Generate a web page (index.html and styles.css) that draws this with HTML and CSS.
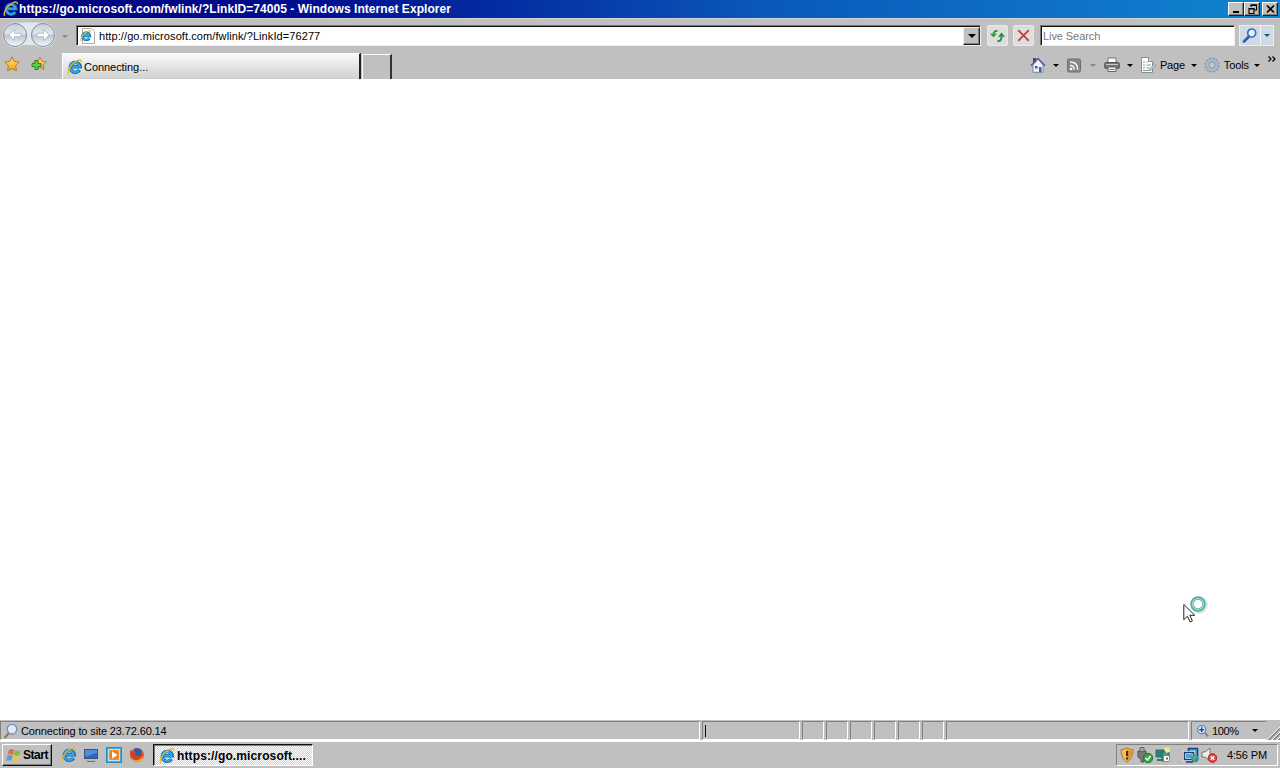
FILE: index.html
```html
<!DOCTYPE html>
<html lang="en">
<head>
<meta charset="utf-8">
<title>Windows Internet Explorer</title>
<link rel="stylesheet" href="styles.css">
</head>
<body>
<svg class="defs" width="0" height="0" aria-hidden="true">
  <defs>
    <linearGradient id="orb" x2="0" y2="1"><stop stop-color="#c3cedb"/><stop offset=".45" stop-color="#dfe6ee"/><stop offset=".5" stop-color="#b9c5d4"/><stop offset="1" stop-color="#f4f8fb"/></linearGradient>
    <linearGradient id="starfill" x2="0" y2="1"><stop stop-color="#ffe778"/><stop offset="1" stop-color="#f5a01c"/></linearGradient>
    <symbol id="ie" viewBox="0 0 16 16">
      <path d="M12.5 11a5 5 0 1 1 .7-3.2H5" fill="none" stroke="#1267ad" stroke-width="3.4"/>
      <path d="M12 10.9a4.8 4.8 0 1 1 .7-3.2H5" fill="none" stroke="#35a9e8" stroke-width="1.9"/>
      <path d="M2.2 14.7C-.7 13 4 4.8 9.5 2c3.4-1.8 5.4-1.2 4.8 1.4" fill="none" stroke="#e9b829" stroke-width="1.4"/>
    </symbol>
    <symbol id="star" viewBox="0 0 16 16"><path d="M8 .8l2.2 4.6 5.1.7-3.7 3.6.9 5.1L8 12.4l-4.5 2.4.9-5.1L.7 6.1l5.1-.7z" fill="url(#starfill)" stroke="#b9781c"/></symbol>
    <symbol id="lens" viewBox="0 0 16 16"><path d="M7 9.5L2 14.5" stroke="#2e59ad" stroke-width="2.6" stroke-linecap="round"/><circle cx="9.7" cy="6" r="4" fill="#e4f2fc" stroke="#3d6bc0" stroke-width="1.7"/></symbol>
  </defs>
</svg>

<header class="titlebar">
  <svg class="i16"><use href="#ie"/></svg>
  <span class="title">https://go.microsoft.com/fwlink/?LinkID=74005 - Windows Internet Explorer</span>
  <div class="winbtns">
    <button class="wb"><svg viewBox="0 0 13 10"><path d="M3 8h6" stroke="#000" stroke-width="2"/></svg></button>
    <button class="wb"><svg viewBox="0 0 13 10"><path d="M5 3V.9h5.5V6H8M5 1.5h5.5M3 4.5h5v5H3zM3 5h5" fill="none" stroke="#000" stroke-width="1.1"/></svg></button>
    <button class="wb close"><svg viewBox="0 0 13 10"><path d="M3 1.5l7 7m0-7l-7 7" stroke="#000" stroke-width="1.7"/></svg></button>
  </div>
</header>

<nav class="address-row">
  <svg class="orbs" viewBox="0 0 58 28">
    <path d="M15 1.5h28a12.5 12.5 0 0 1 0 25q-5 0-8-2.5H23q-3 2.5-8 2.5a12.5 12.5 0 0 1 0-25" fill="#e2e7eb"/>
    <g fill="url(#orb)" stroke="#7f8c99"><circle cx="15" cy="14" r="11.5"/><circle cx="43" cy="14" r="11.5"/></g>
    <path d="M14.5 8.5L8.8 14l5.7 5.5v-3.8H21v-3.4h-6.5zM43.5 8.5l5.7 5.5-5.7 5.5v-3.8H37v-3.4h6.5z" fill="#fff" stroke="#a3b2c2" stroke-width=".8"/>
  </svg>
  <i class="arrow dim history"></i>
  <div class="address field">
    <svg class="i16 pageie" viewBox="0 0 16 16"><path d="M2.5.5h9l3 3v12h-12z" fill="#fff" stroke="#a9a9a9"/><use href="#ie" x="0" y="2" width="12" height="12"/></svg>
    <span class="url">http://go.microsoft.com/fwlink/?LinkId=76277</span>
    <button class="drop"><i class="arrow big"></i></button>
  </div>
  <button class="tool refresh"><svg viewBox="0 0 17 17"><path d="M8.5 4q-4-.5-4 4" fill="none" stroke="#2f9a43" stroke-width="1.9"/><path d="M1 6.8h7L4.5 10.5z" fill="#2f9a43"/><path d="M8.5 14q4 .5 4-4" fill="none" stroke="#2c873c" stroke-width="1.9"/><path d="M9 9.8h7L12.5 5.5z" fill="#2c873c"/></svg></button>
  <button class="tool stop"><svg viewBox="0 0 16 16"><path d="M3 3l10 10M13 3L3 13" stroke="#c43e42" stroke-width="1.8"/></svg></button>
  <div class="search field"><span>Live Search</span></div>
  <div class="go"><button><svg class="i16"><use href="#lens"/></svg></button><button><i class="arrow blue"></i></button></div>
</nav>

<div class="tabs-row">
  <svg class="i16 fav"><use href="#star"/></svg>
  <svg class="i16 addfav" viewBox="0 0 16 16"><use href="#star" x="2" y="0" width="14" height="15"/><path d="M4 4.5h3v3h3v3H7v3H4v-3H1v-3h3z" fill="#5fd045" stroke="#28862b"/></svg>
  <div class="tab"><svg class="i16"><use href="#ie"/></svg><span>Connecting...</span></div>
  <div class="newtab"></div>
  <div class="commands">
    <svg class="i16 home" viewBox="0 0 16 16"><path d="M3 1h3v5H3z" fill="#4d3e88"/><path d="M3 8l5-6 5 6v7.3H3z" fill="#f1f3fa" stroke="#7986a8"/><path d="M.8 8.8L8 1.5l7.2 7.3" fill="none" stroke="#5b5c9e" stroke-width="1.5"/><path d="M5 9h2.5v2.5H5zM9 10h2.5v5H9z" fill="#3d5d93"/></svg>
    <i class="arrow a1"></i>
    <svg class="i16 feed" viewBox="0 0 16 16"><rect x="1.5" y="2" width="13" height="13" rx="1.5" fill="#878787" stroke="#6e6e6e"/><path d="M4 8.5q4.2 0 4.2 4.2M4 5q7.7 0 7.7 7.7" fill="none" stroke="#f4f4f4" stroke-width="1.5"/><circle cx="5" cy="12" r="1.3" fill="#fff"/></svg>
    <i class="arrow dim a2"></i>
    <svg class="i16 printer" viewBox="0 0 16 16"><path d="M4 6V1h8v5" fill="#fff" stroke="#777"/><rect x=".7" y="5.5" width="14.6" height="6" rx="1.5" fill="#777" stroke="#555"/><path d="M2 7.5h12" stroke="#c7c7c7"/><path d="M4 10h8v4.5H4z" fill="#f1f1f1" stroke="#666"/><path d="M5.5 12.5h5" stroke="#777"/></svg>
    <i class="arrow a3"></i>
    <svg class="i16 page" viewBox="0 0 16 16"><path d="M1.5.5h7l4 4v11h-11z" fill="#fff" stroke="#83928b"/><path d="M8.5.5v4h4" fill="#ddd" stroke="#83928b"/><path d="M3 5h2m1.5 0H8M3 8h2m1.5 0H11M3 11h2m1.5 0H10M3 13.5h7" stroke="#879a8c"/><path d="M9.5 12.5l5-6 1.3 1.5-5 5.5z" fill="#dfe5dc" stroke="#61756a" stroke-width=".7"/></svg>
    <span class="pagetext">Page</span><i class="arrow a4"></i>
    <svg class="i16 gear" viewBox="0 0 16 16"><circle cx="8" cy="8" r="6.7" fill="none" stroke="#8194a9" stroke-width="1.6" stroke-dasharray="2.3 1.2"/><circle cx="8" cy="8" r="4.7" fill="none" stroke="#a6b8c9" stroke-width="3.2"/><circle cx="8" cy="8" r="3" fill="#c8c8c8" stroke="#7890a8" stroke-width=".8"/></svg>
    <span class="toolstext">Tools</span><i class="arrow a5"></i>
    <svg class="chevrons" viewBox="0 0 8 6"><path d="M.5.5L3 3 .5 5.5M4.5.5L7 3 4.5 5.5" fill="none" stroke="#000" stroke-width="1.2"/></svg>
  </div>
</div>

<main class="document"></main>

<footer class="status">
  <div class="pane message"><svg class="i16" viewBox="0 0 16 16"><path d="M6 10l-4.5 5" stroke="#a0713b" stroke-width="2"/><circle cx="9" cy="6.2" r="4.8" fill="#ddeafa" stroke="#7590ae" stroke-width="1.3"/></svg><span>Connecting to site 23.72.60.14</span></div>
  <div class="pane progress"><b></b></div>
  <div class="pane small"></div><div class="pane small"></div><div class="pane small"></div><div class="pane small"></div><div class="pane small"></div><div class="pane small"></div>
  <div class="pane zone"></div>
  <div class="pane zoompane"><svg viewBox="0 0 16 16"><path d="M9 9l5 5" stroke="#a18355" stroke-width="2.3"/><circle cx="6.5" cy="6.5" r="4.6" fill="#dcecff" stroke="#5b86c4" stroke-width="1.5"/><path d="M6.5 3.7v5.6M3.7 6.5h5.6" stroke="#164caa" stroke-width="1.8"/></svg><span>100%</span><i class="arrow"></i></div>
  <svg class="grip" viewBox="0 0 13 14"><path d="M0 14L13 1M5 14l8-8M10 14l3-3" stroke="#fff"/><path d="M1.5 14L13 2.5M6.5 14L13 7.5M11.5 14l1.5-1.5" stroke="#808080" stroke-width="1.5"/></svg>
</footer>

<footer class="taskbar">
  <button class="start"><svg viewBox="0 0 17 16"><path d="M3 3q3-2 5 0L7 8Q4 6 1.5 8z" fill="#e56a35"/><path d="M9 3q3 2 6 0l-1.5 5q-3 1.5-5.5 0z" fill="#83b853"/><path d="M1.2 9q3-2 5.5 0l-1.4 5Q3 12.5 0 14z" fill="#579ed9"/><path d="M7.8 9q3 2 5.5 0L12 14q-3 1.5-5.5 0z" fill="#f1c337"/></svg><span>Start</span></button>
  <div class="quick">
    <svg class="i16"><use href="#ie"/></svg>
    <svg class="i16" viewBox="0 0 16 16"><rect x="1.5" y="2.5" width="13" height="9" fill="#2865c6" stroke="#44536c"/><path d="M2 3h12v3L2 10z" fill="#508bdd"/><path d="M2 13.5h12" stroke="#aeb9c4"/><path d="M4 14.5h8" stroke="#66717e"/></svg>
    <svg class="i16" viewBox="0 0 16 16"><rect x=".5" y=".5" width="15" height="15" fill="#46a9d6" stroke="#2f89b7"/><rect x="2.5" y="2.5" width="11" height="11" fill="#f39622" stroke="#b9e5f5"/><circle cx="8" cy="8" r="4.5" fill="#e87f18"/><path d="M6 4.3l5.5 3.7L6 11.7z" fill="#fff"/></svg>
    <svg class="i16 fox" viewBox="0 0 16 16"><circle cx="8" cy="8" r="7" fill="#e65c21"/><path d="M5 1.7q5-2 8 2l-1 5-5 1-2-2z" fill="#365b9d"/><path d="M1.3 3l3 2 3 1-2 2q2 3 5 1.6 3-1 2-5Q15 7 13 11q-4 5-9 1Q0 9 1.3 3" fill="#d9411e"/><path d="M2 11q3 3 7 2 4-1 5-5 0 6-5 6.5-5 .5-7-3.5" fill="#ffae2c"/></svg>
  </div>
  <button class="task"><svg class="i16"><use href="#ie"/></svg><span>https://go.microsoft....</span></button>
  <div class="tray">
    <svg class="i16" viewBox="0 0 16 16"><path d="M8 .8q3 2 6 1.8 0 9-6 12.6Q2 11.6 2 2.6 5 2.8 8 .8" fill="#f4bd55" stroke="#b3762b"/><path d="M8 2v12q4-3 5-10-3 0-5-2" fill="#dc8c28"/><path d="M8 4v5m0 1.5v2" stroke="#422d22" stroke-width="2"/></svg>
    <svg class="i16 usb" viewBox="0 0 16 16"><path d="M1 4h8v6l-2 2v3H4v-3l-3-2z" fill="#777" stroke="#555"/><path d="M3 4V.5h4V4" fill="#aaa" stroke="#666"/><circle cx="11" cy="11" r="4.7" fill="#39a63d" stroke="#197b28"/><path d="M8.5 11l2 2 3-4" fill="none" stroke="#fff" stroke-width="1.5"/></svg>
    <svg class="i16 vm" viewBox="0 0 16 16"><path d="M1 3h8v7H1z" fill="#22857e" stroke="#4a6862"/><path d="M7 5h7v9H7z" fill="#399f98" stroke="#2a6661"/><path d="M9 9h5v5H9z" fill="#fff"/><path d="M11 10.5h2v2h-2z" fill="#a54b45"/><path d="M2 12h5v2H2z" fill="#227d65"/><path d="M9 1l5-1 1 5-4 1z" fill="#f2e88b"/></svg>
    <svg class="i16 net" viewBox="0 0 16 16"><path d="M5.5 1.5h9v8h-9z" fill="#5ba9df" stroke="#173e70" stroke-width="1.5"/><path d="M1.5 5.5h9v7h-9z" fill="#4ba3dc" stroke="#e8f2f8" stroke-width="3"/><path d="M1.5 5.5h9v7h-9zM3 15h7" fill="none" stroke="#183d71" stroke-width="1.5"/><circle cx="12" cy="11.5" r="3.7" fill="#2387bb"/><path d="M9 10l4-2 2 3-3 1 1 3-3-2z" fill="#46b365"/></svg>
    <svg class="i16 sound" viewBox="0 0 16 16"><path d="M1 5h3l5-4v13l-5-4H1z" fill="#eee" stroke="#777"/><circle cx="11.5" cy="11" r="4.3" fill="#df4640" stroke="#b71f26"/><path d="M9.7 9.2l3.6 3.6m0-3.6l-3.6 3.6" stroke="#fff" stroke-width="1.4"/></svg>
    <span>4:56 PM</span>
  </div>
</footer>

<svg class="cursor" viewBox="0 0 28 30"><circle cx="16" cy="10" r="6.3" fill="none" stroke="#d6e4e2" stroke-width="5"/><circle cx="15" cy="9" r="6" fill="#fff" stroke="#55afa5" stroke-width="3.4"/><circle cx="15" cy="9" r="5.5" fill="none" stroke="#a2dcd4" stroke-width="1.2"/><path d="M.8 9.5v15.2l3.6-3.5 2.7 5.8 2.3-1-2.6-5.7h5z" fill="#fff" stroke="#222"/></svg>
</body>
</html>
```

FILE: styles.css
```css
* { box-sizing: border-box; }
body { margin: 0; width: 1280px; height: 768px; overflow: hidden; display: flex; flex-direction: column; background: #c0c0c0; color: #000; font: 11px/14px "Liberation Sans", Arial, sans-serif; }
svg { display: block; flex: none; }
button { font: inherit; color: inherit; padding: 0; border: 0; background: none; border-radius: 0; display: flex; align-items: center; justify-content: center; flex: none; }
span { white-space: nowrap; }
.defs { position: absolute; }
.i16 { width: 16px; height: 16px; }
.arrow { width: 0; height: 0; border: 3px solid transparent; border-top-color: #000; border-bottom: 0; flex: none; }
.arrow.big { border-width: 4px 4px 0; }
.arrow.dim { border-top-color: #888; }
.arrow.blue { border-top-color: #28566e; }

.titlebar { height: 18px; flex: none; display: flex; align-items: center; padding: 0 2px 0 3px; background: linear-gradient(90deg, #00007b, #000f91 25%, #0a59b9 60%, #1084d0); color: #fff; font-weight: bold; }
.title { font-size: 12px; letter-spacing: .05px; }
.winbtns { display: flex; margin-left: auto; }
.wb { width: 16px; height: 14px; background: #c0c0c0; border: 1px solid; border-color: #fff #222 #222 #fff; box-shadow: inset -1px -1px #808080; }
.wb svg { width: 13px; height: 10px; }
.close { margin-left: 2px; }

.address-row { height: 34px; flex: none; display: flex; align-items: center; border-top: 1px solid #d4d4d4; padding-bottom: 1px; }
.orbs { width: 58px; height: 28px; }
.history { margin: 2px 8px 0 4px; }
.field { height: 21px; display: flex; align-items: center; background: #fff; border: 1px solid; border-color: #777 #eee #eee #777; box-shadow: inset 1px 1px #111; }
.address { width: 905px; padding-left: 3px; }
.url { margin: 1px 0 0 3px; letter-spacing: .09px; }
.pageie { margin-top: 1px; }
.drop { width: 17px; height: 18px; margin: 1px 0 0 auto; background: #c0c0c0; border: 1px solid; border-color: #eee #222 #222 #eee; box-shadow: inset -1px -1px #808080; }
.tool { width: 21px; height: 21px; background: #dedede; border: 1px solid #e9e9ed; border-radius: 2px; }
.tool svg { width: 17px; height: 17px; }
.refresh { margin-left: 6px; }
.stop { margin-left: 5px; }
.search { width: 195px; margin-left: 6px; padding-left: 2px; color: #777; }
.search span { margin-top: 1px; letter-spacing: -.08px; }
.go { display: flex; margin-left: 4px; height: 21px; border: 1px solid #e8eef4; background: #cfdae7; }
.go button { width: 20px; }
.go button + button { width: 13px; border-left: 1px solid #f3f6fb; }

.tabs-row { height: 27px; flex: none; display: flex; align-items: flex-end; }
.fav { margin: 0 0 7px 4px; }
.addfav { margin: 0 0 7px 11px; }
.tab { width: 299px; height: 26px; margin-left: 15px; padding: 0 0 0 4px; display: flex; align-items: center; background: linear-gradient(#fafafa, #d0d0d0); border: solid; border-width: 1px 2px 0 1px; border-color: #fff #222 #fff #fff; }
.tab span { margin-left: 1px; letter-spacing: -.05px; }
.newtab { width: 30px; height: 25px; margin-left: 1px; border: solid; border-width: 1px 2px 0 1px; border-color: #fff #333 #fff #fff; }
.commands { height: 27px; margin-left: auto; padding-bottom: 1px; display: flex; align-items: center; }
.a1 { margin: 0 7px; }
.a2 { margin: 0 8px; }
.a3 { margin: 0 7px; }
.pagetext { margin-left: 4px; letter-spacing: -.2px; }
.a4 { margin: 0 7px 0 6px; }
.toolstext { margin-left: 4px; letter-spacing: -.1px; }
.a5 { margin: 0 8px 0 5px; }
.chevrons { width: 8px; height: 6px; margin: -12px 4px 0 0; }

.document { flex: 1; background: #fff; }

.status { height: 21px; flex: none; display: flex; align-items: flex-start; border-bottom: 1px solid #fff; padding-top: 1px; }
.pane { height: 19px; flex: none; display: flex; align-items: center; border: 1px solid; border-color: #808080 #fff #fff #808080; margin-right: 2px; }
.message { width: 700px; padding-left: 2px; }
.message span { margin: 1px 0 0 2px; letter-spacing: -.12px; }
.progress { width: 98px; padding-left: 2px; }
.progress b { width: 1px; height: 12px; background: #000060; }
.small { width: 22px; }
.zone { width: 243px; }
.zoompane { width: 75px; padding-left: 4px; margin-right: 0; border-right: 0; }
.zoompane svg { width: 14px; height: 14px; }
.zoompane span { margin: 1px 0 0 2px; letter-spacing: -.4px; }
.zoompane .arrow { margin-left: 13px; }
.grip { width: 13px; height: 14px; margin: 5px 0 0 1px; }

.taskbar { height: 27px; flex: none; display: flex; align-items: flex-start; border-top: 1px solid #fff; padding-top: 2px; font-weight: bold; }
.start { width: 50px; height: 22px; margin-left: 2px; border: 1px solid; border-color: #fff #111 #111 #fff; box-shadow: inset -1px -1px #808080; }
.start svg { width: 17px; height: 16px; }
.start span { font-size: 12px; letter-spacing: -.5px; }
.quick { display: flex; margin: 3px 0 0 9px; gap: 7px; }
.quick .i16:nth-child(2) { margin: 0 0 0 -1px; }
.task { width: 160px; height: 22px; margin-left: 8px; padding: 1px 0 0 5px; justify-content: flex-start; border: 1px solid; border-color: #111 #fff #fff #111; box-shadow: inset 1px 1px #808080; background: repeating-conic-gradient(#fff 0 25%, #d0d0d0 0 50%) 0 0 / 2px 2px; }
.task span { margin-left: 2px; font-size: 12px; letter-spacing: .12px; }
.tray { width: 162px; height: 22px; margin-left: auto; margin-right: 2px; padding: 0 0 0 2px; display: flex; align-items: center; border: 1px solid; border-color: #808080 #fff #fff #808080; font-weight: normal; }
.usb, .vm { margin-left: 2px; }
.net { margin-left: 12px; }
.sound { margin-left: 2px; }
.tray span { margin-left: 10px; letter-spacing: -.15px; }

.cursor { position: absolute; left: 1183px; top: 595px; width: 28px; height: 30px; }
```
